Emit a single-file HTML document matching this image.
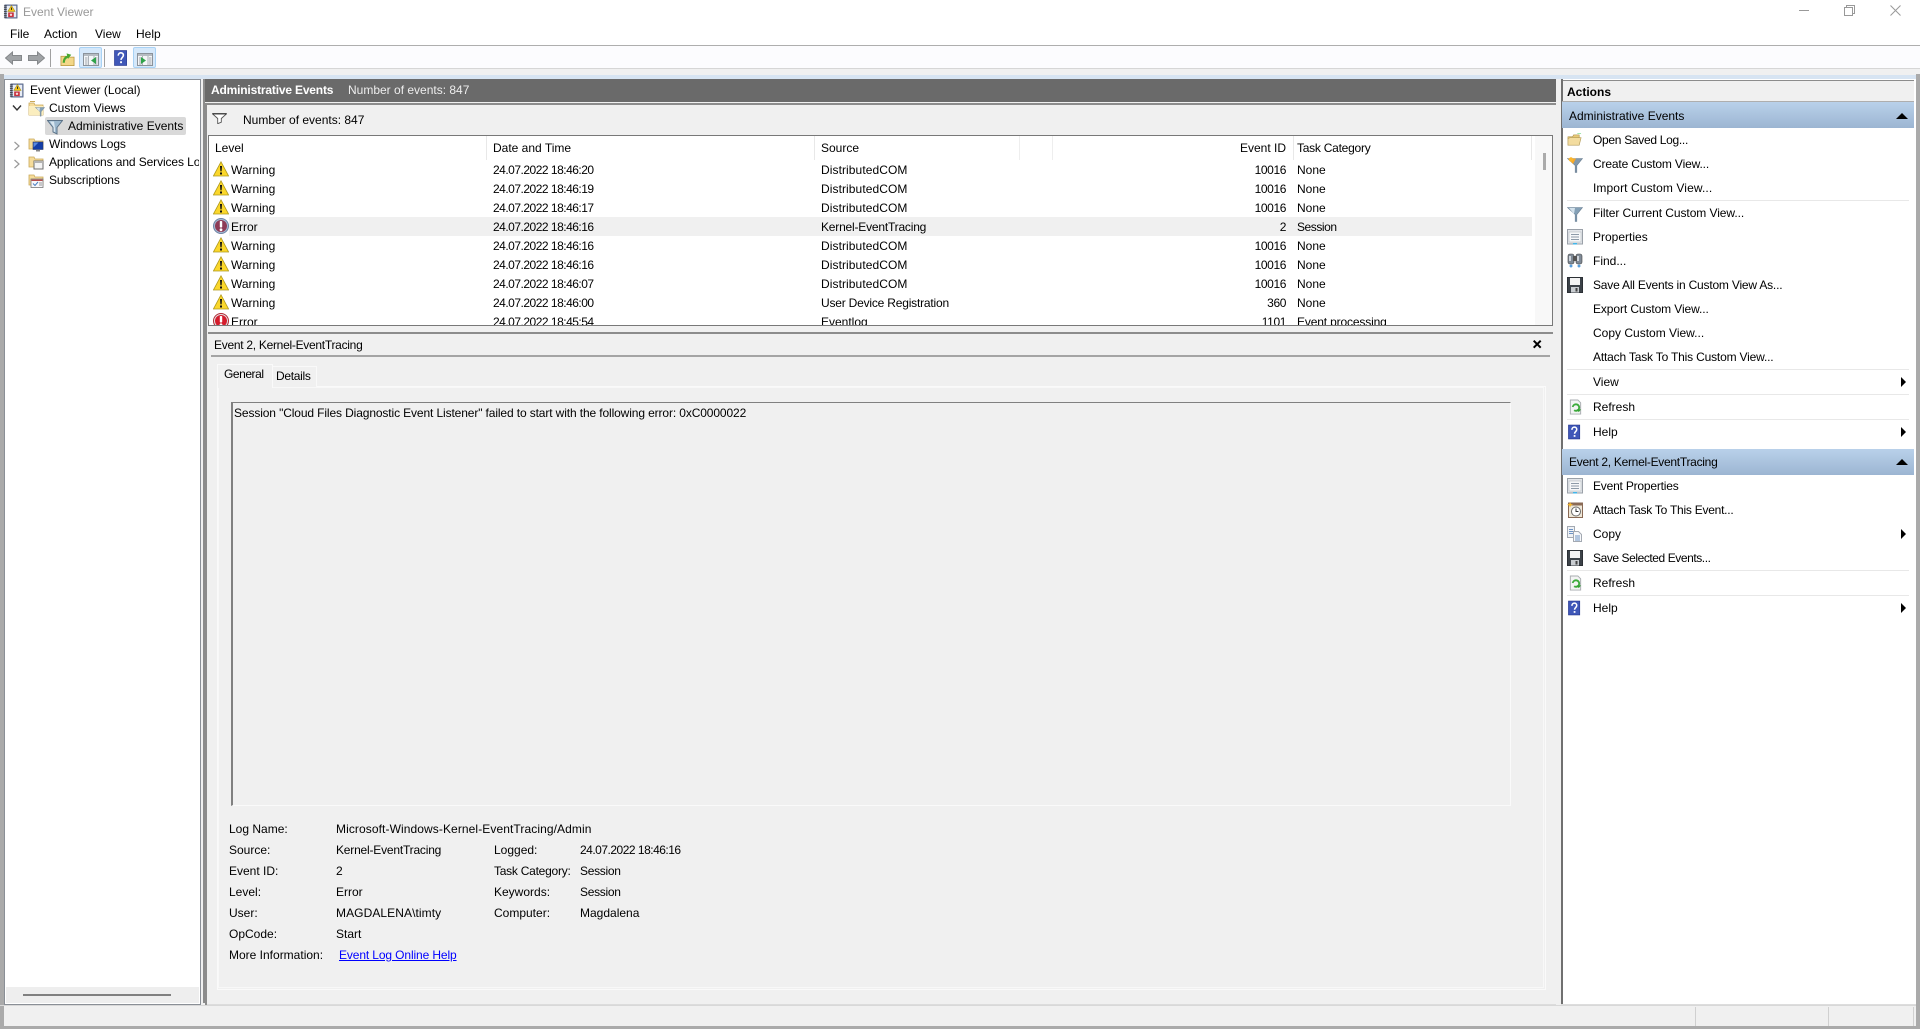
<!DOCTYPE html>
<html><head><meta charset="utf-8"><title>Event Viewer</title>
<style>
html,body{margin:0;padding:0;width:1920px;height:1029px;overflow:hidden;background:#f0f0f0}
body{position:relative;font:12px/16px "Liberation Sans",Arial,sans-serif;color:#000}
.b,.t,svg{position:absolute;display:block}
.t{white-space:nowrap;height:16px}
.r{text-align:right}
.dt{letter-spacing:-.5px}
.n{letter-spacing:-.4px}
.ds{letter-spacing:.08px}
.sep{position:absolute;left:1567px;width:342px;height:1px;background:#e8e8e8}
.hd{position:absolute;left:1562px;width:352px;height:26px;background:linear-gradient(#b9d1ea,#9cb5d2)}
.tri{position:absolute;left:1896px;width:0;height:0;border-left:6px solid transparent;border-right:6px solid transparent;border-bottom:6px solid #000}
.arr{position:absolute;left:1901px;width:0;height:0;border-top:5px solid transparent;border-bottom:5px solid transparent;border-left:5px solid #000}
</style></head><body>
<svg width="0" height="0" style="position:absolute"><defs>
<symbol id="warn" viewBox="0 0 16 16"><path d="M8 .8 15.6 15H.4Z" fill="#fbd72b" stroke="#b09a1e" stroke-width=".8"/><path d="M7 5h2l-.4 5.4H7.400Z" fill="#111"/><rect x="7" y="11.500" width="2" height="2" fill="#111"/></symbol>
<symbol id="err" viewBox="0 0 16 16"><circle cx="8" cy="8" r="7.500" fill="#e2e2e2" stroke="#b02a35"/><circle cx="8" cy="8" r="6" fill="#d41c2c"/><rect x="6.800" y="3" width="2.400" height="6.500" rx=".8" fill="#fff"/><circle cx="8" cy="11.800" r="1.400" fill="#fff"/></symbol>
<symbol id="errd" viewBox="0 0 16 16"><circle cx="8" cy="8" r="7.500" fill="#a5bbd2" stroke="#6f83a5"/><circle cx="8" cy="8" r="6" fill="#8e3b56"/><rect x="6.800" y="3" width="2.400" height="6.500" rx=".8" fill="#fff"/><circle cx="8" cy="11.800" r="1.400" fill="#fff"/></symbol>
<symbol id="ev" viewBox="0 0 16 16"><rect x="2" y="1" width="13" height="14" fill="#8a97b5" stroke="#4a5a80" stroke-width=".8"/><rect x="4" y="2" width="10" height="12" fill="#e8edf5"/><path d="M1 2h3M1 4h3M1 6h3M1 8h3M1 10h3M1 12h3M1 14h3" stroke="#333" stroke-width=".8"/><path d="M9 1.500 13 8H5Z" fill="#f2c419" stroke="#8f7a10" stroke-width=".5"/><rect x="8.600" y="3.800" width="1" height="2.500" fill="#222"/><rect x="5.500" y="9" width="6" height="5" fill="#c9333f"/><circle cx="8.500" cy="11.500" r="1.300" fill="#f3dede"/></symbol>
<symbol id="folder" viewBox="0 0 16 16"><path d="M1 3h5l1 2h8v10H1Z" fill="#f6dc9a" stroke="#c9a85a" stroke-width=".8"/><path d="M1 6h14v9H1Z" fill="#fbeebf"/><path d="M2 1.500h5" stroke="#c9a85a"/></symbol>
<symbol id="funnel" viewBox="0 0 16 16"><path d="M.5 1.500h15L10 8.500V15l-4-2V8.500Z" fill="#9db9cf" stroke="#5c7388"/><path d="M3 2.500h4L8 9v4L6.500 12.500V8Z" fill="#d8e6ef"/></symbol>
<symbol id="funnelo" viewBox="0 0 16 16"><path d="M.5 1.500h15L9.800 8.500V15.500H8.200V8.500Z" fill="#8399ab" stroke="#6c8094" stroke-width=".6"/><path d="M1 1.500h8L6 7Z" fill="#f9a825"/><circle cx="4" cy="2.500" r="2.200" fill="#fbb62c"/></symbol>
<symbol id="funnelg" viewBox="0 0 16 16"><path d="M.5 1.500h15L9.800 8.500V15.500H8.200V8.500Z" fill="#84a0b6" stroke="#6c8094" stroke-width=".6"/><path d="M2 2h6L7 8Z" fill="#d4e2ec"/></symbol>
<symbol id="funnelk" viewBox="0 0 15 11" preserveAspectRatio="none"><path d="M.5 .8h14l-5.200 4.700v3.700l-3.600 1.500V5.500Z" fill="#fff" stroke="#555" stroke-width=".9"/><path d="M.5 .8h14" stroke="#222" stroke-width="1.100"/></symbol>
<symbol id="prop" viewBox="0 0 16 16"><rect x=".5" y=".5" width="15" height="14.500" fill="#e3e6ea" stroke="#9aa0a8"/><rect x="2" y="3" width="12" height="10" fill="#f6f7f9" stroke="#b7bcc2" stroke-width=".6"/><path d="M4 5.500h8M4 8h8M4 10.500h8" stroke="#8d9aa8"/><rect x="6" y="14" width="4" height="1.500" fill="#41b6ea"/></symbol>
<symbol id="find" viewBox="0 0 16 16"><rect x="1" y="1" width="6" height="10" rx="2" fill="#7f8a96" stroke="#444" stroke-width=".6"/><rect x="9" y="1" width="6" height="10" rx="2" fill="#7f8a96" stroke="#444" stroke-width=".6"/><rect x="6" y="3" width="4" height="5" fill="#555"/><rect x="2" y="3" width="2" height="5" fill="#cfd5dc"/><rect x="10" y="3" width="2" height="5" fill="#cfd5dc"/><path d="M4 11.500v3M2.500 13h3M12 11.500v3M10.500 13h3" stroke="#3b8ed8" stroke-width="1.200"/></symbol>
<symbol id="save" viewBox="0 0 16 16"><path d="M.5.500h15v15H.5Z" fill="#3c4248" stroke="#2c3035"/><rect x="3" y="1" width="10" height="7" fill="#f3f3f3"/><rect x="4" y="10" width="8" height="5.500" fill="#c9cdd1"/><rect x="8.500" y="11" width="2" height="3.500" fill="#444"/></symbol>
<symbol id="refresh" viewBox="0 0 16 16"><path d="M2.500.500h8l3 3v12h-11Z" fill="#f3f4f4" stroke="#a8adb0"/><path d="M5 8a3.500 3.500 0 1 1 1.500 3.500" fill="none" stroke="#3dab3c" stroke-width="2"/><path d="M9 10.500h5l-2.500 3Z" fill="#33a032"/></symbol>
<symbol id="help" viewBox="0 0 16 16"><rect x=".5" width="13" height="16" fill="#3f57b8" stroke="#1f2f86" stroke-width=".6"/><path d="M4.500 5.500C4.500 1.500 10 1.500 10 5c0 2.500-2.500 2.500-2.500 5" fill="none" stroke="#fff" stroke-width="1.700"/><rect x="6.500" y="11.500" width="2" height="2" fill="#fff"/></symbol>
<symbol id="task" viewBox="0 0 16 16"><rect x="1.500" y="1" width="14" height="14.500" fill="#eee7d8" stroke="#8a6a55"/><rect x="1.500" y="1" width="14" height="2.500" fill="#8a6a55"/><circle cx="9" cy="9.500" r="4.500" fill="#fff" stroke="#6b6b6b"/><path d="M9 6.500v3h2.500" stroke="#333" fill="none"/><path d="M3 0l1 2 2 .5-2 1-1 2-.8-2L0 2.500 2.200 2Z" fill="#f5b82c"/></symbol>
<symbol id="copy" viewBox="0 0 16 16"><path d="M.5.500h7v11h-7Z" fill="#eef1f5" stroke="#a3a9b2"/><path d="M2 3.500h4M2 5.500h4M2 7.500h4" stroke="#6d93c4"/><path d="M6.500 5.500h5l3 3v7h-8Z" fill="#f7f8fa" stroke="#a3a9b2"/><path d="M8 10h5M8 12h5M8 14h5" stroke="#6d93c4"/></symbol>
<symbol id="open" viewBox="0 0 16 16"><path d="M1 4h5l1-2h6v4H1Z" fill="#e6c877" stroke="#a98a3e" stroke-width=".6"/><path d="M1 6l2-1h12l-2 8H1Z" fill="#f3dc9f" stroke="#b39a55" stroke-width=".7"/><path d="M11 0h4" stroke="#33cc55"/></symbol>
<symbol id="up" viewBox="0 0 16 16"><path d="M1 5h5l1 1h8v9H1Z" fill="#f3d788" stroke="#b8963d" stroke-width=".8"/><path d="M4 12c0-4 2-6 5-7" stroke="#49a82f" stroke-width="2.400" fill="none"/><path d="M7 2l5 1.500L8.500 8Z" fill="#49a82f"/></symbol>
<symbol id="pane1" viewBox="0 0 16 13"><rect x=".5" y=".5" width="15" height="12" fill="#f4f6f8" stroke="#8b929a"/><rect x="1" y="1" width="14" height="2" fill="#b6bcc2"/><path d="M5.500 3v9M11 3v9" stroke="#adb3b9"/><path d="M2 5h2.500M2 7h2.500M2 9h2.500M2 11h2.500M12 5h2.500M12 7h2.500M12 9h2.500M12 11h2.500" stroke="#a0a6ad"/></symbol>
<symbol id="mon" viewBox="0 0 16 16"><path d="M1 3h5l1 2h8v8H1Z" fill="#f6dc9a" stroke="#c9a85a" stroke-width=".8"/><rect x="5" y="6" width="10" height="7.500" fill="#143ea8" stroke="#2b3a66" stroke-width=".6"/><path d="M5.500 6.500h5l-5 5Z" fill="#5a8ae0"/><rect x="8" y="14" width="4" height="1.500" fill="#888"/></symbol>
<symbol id="app" viewBox="0 0 16 16"><path d="M1 3h5l1 2h8v8H1Z" fill="#f6dc9a" stroke="#c9a85a" stroke-width=".8"/><rect x="6" y="7" width="9" height="8" fill="#f4f4f4" stroke="#6f6f6f"/><rect x="6" y="7" width="9" height="2" fill="#b3b3b3"/></symbol>
<symbol id="sub" viewBox="0 0 16 16"><path d="M1 3h5l1 2h8v8H1Z" fill="#f6dc9a" stroke="#c9a85a" stroke-width=".8"/><rect x="3" y="7" width="12" height="8.500" fill="#f7f7fa" stroke="#777" stroke-width=".8"/><path d="M3.500 7.500h11v1.500h-11Z" fill="#b74b4b"/><path d="M5 11.500l2 2 3-3.500" stroke="#4a7fc1" fill="none"/><path d="M11 11h3M11 13h3" stroke="#999"/></symbol>
</defs></svg>

<!-- edges -->
<div class="b" style="left:0;top:74px;width:4px;height:955px;background:#aaa"></div>
<div class="b" style="left:1916px;top:74px;width:4px;height:955px;background:#aaa"></div>
<div class="b" style="left:0;top:1026px;width:1920px;height:3px;background:#aaa"></div>

<!-- title -->
<div class="b" style="left:0;top:0;width:1920px;height:45px;background:#fff"></div>
<svg style="left:3px;top:4px" width="15" height="15"><use href="#ev"/></svg>
<div class="t" style="left:23px;top:4px;color:#999">Event Viewer</div>
<svg style="left:1798px;top:3px" width="14" height="14"><path d="M1 7.500h10" stroke="#999" fill="none"/></svg>
<svg style="left:1844px;top:5px" width="12" height="12"><path d="M.5 2.500h8v8h-8Z M2.500 2.500V.5h8v8H8.500" fill="none" stroke="#999"/></svg>
<svg style="left:1890px;top:5px" width="12" height="12"><path d="M.5.500l10 10M10.500.500l-10 10" stroke="#999" fill="none"/></svg>
<div class="t" style="left:10px;top:26px">File</div>
<div class="t" style="left:44px;top:26px">Action</div>
<div class="t" style="left:95px;top:26px">View</div>
<div class="t" style="left:136px;top:26px">Help</div>
<div class="b" style="left:0;top:45px;width:1920px;height:1px;background:#aeaeae"></div>

<!-- toolbar -->
<div class="b" style="left:0;top:46px;width:1920px;height:22px;background:#fcfcfe"></div>
<div class="b" style="left:0;top:68px;width:1920px;height:1px;background:#d6d6d6"></div>
<svg style="left:5px;top:51px" width="17" height="14"><path d="M.5 7 7.500 1v3.500h9v5h-9V13Z" fill="#a0a3a6" stroke="#85888b"/></svg>
<svg style="left:28px;top:51px" width="17" height="14"><path d="M16.500 7 9.500 1v3.500h-9v5h9V13Z" fill="#a0a3a6" stroke="#85888b"/></svg>
<div class="b" style="left:50px;top:49px;width:1px;height:18px;background:#a0a0a0"></div>
<svg style="left:60px;top:51px" width="15" height="16"><use href="#up"/></svg>
<div class="b" style="left:79px;top:47px;width:21px;height:19px;background:#d5e8fa;border:1px solid #a8d2f5;border-radius:2px"></div>
<svg style="left:83px;top:53px" width="16" height="13"><use href="#pane1"/></svg>
<svg style="left:91px;top:57px" width="6" height="7"><path d="M5 0v7L0 3.500Z" fill="#2fa34a"/></svg>
<div class="b" style="left:104px;top:49px;width:1px;height:18px;background:#a0a0a0"></div>
<svg style="left:114px;top:50px" width="15" height="16"><use href="#help"/></svg>
<div class="b" style="left:133px;top:47px;width:21px;height:19px;background:#d5e8fa;border:1px solid #a8d2f5;border-radius:2px"></div>
<svg style="left:137px;top:53px" width="16" height="13"><use href="#pane1"/></svg>
<svg style="left:141px;top:57px" width="6" height="7"><path d="M0 0v7l5-3.500Z" fill="#2fa34a"/></svg>

<!-- band -->
<div class="b" style="left:4px;top:75px;width:1912px;height:4px;background:#d7e4f2"></div>

<!-- tree -->
<div class="b" style="left:4px;top:79px;width:195px;height:924px;background:#fff;border:1px solid #8a8f96"></div>
<div class="b" style="left:6px;top:987px;width:193px;height:16px;background:#eee"></div>
<div class="b" style="left:23px;top:994px;width:148px;height:2px;background:#808080"></div>
<div class="b" style="left:45px;top:117px;width:141px;height:18px;background:#d9d9d9;border-radius:2px"></div>
<svg style="left:9px;top:83px" width="15" height="15"><use href="#ev"/></svg>
<div class="t" style="left:30px;top:82px">Event Viewer (Local)</div>
<svg style="left:12px;top:104px" width="10" height="8"><path d="M1 1.500 5 6l4-4.500" fill="none" stroke="#333" stroke-width="1.400"/></svg>
<svg style="left:28px;top:100px" width="16" height="16"><use href="#folder"/></svg>
<svg style="left:35px;top:106px" width="10" height="11"><use href="#funnelg"/></svg>
<div class="t" style="left:49px;top:100px">Custom Views</div>
<svg style="left:47px;top:119px" width="16" height="16"><use href="#funnel"/></svg>
<div class="t" style="left:68px;top:118px">Administrative Events</div>
<svg style="left:13px;top:141px" width="8" height="10"><path d="M1.500 1 6 5 1.500 9" fill="none" stroke="#999" stroke-width="1.200"/></svg>
<svg style="left:28px;top:136px" width="16" height="16"><use href="#mon"/></svg>
<div class="t" style="left:49px;top:136px;letter-spacing:-.1px">Windows Logs</div>
<svg style="left:13px;top:159px" width="8" height="10"><path d="M1.500 1 6 5 1.500 9" fill="none" stroke="#999" stroke-width="1.200"/></svg>
<svg style="left:28px;top:154px" width="16" height="16"><use href="#app"/></svg>
<div class="t" style="left:49px;top:154px;width:150px;overflow:hidden;letter-spacing:-.1px">Applications and Services Logs</div>
<svg style="left:28px;top:172px" width="16" height="16"><use href="#sub"/></svg>
<div class="t" style="left:49px;top:172px;letter-spacing:-.1px">Subscriptions</div>

<!-- center header -->
<div class="b" style="left:203px;top:79px;width:2px;height:924px;background:#8c8c8c"></div>
<div class="b" style="left:205px;top:79px;width:1351px;height:23px;background:#6a6a6a"></div>
<div class="t" style="left:211px;top:82px;color:#fff;font-weight:bold;letter-spacing:-.18px">Administrative Events</div>
<div class="t" style="left:348px;top:82px;color:#eee">Number of events: 847</div>
<div class="b" style="left:205px;top:103px;width:1351px;height:2px;background:#8c8c8c"></div>
<div class="b" style="left:205px;top:103px;width:2px;height:902px;background:#8c8c8c"></div>
<svg style="left:212px;top:113px" width="15" height="11"><use href="#funnelk"/></svg>
<div class="t" style="left:243px;top:112px">Number of events: 847</div>

<!-- list -->
<div class="b" style="left:208px;top:135px;width:1343px;height:189px;background:#fff;border:1px solid #787878;overflow:hidden">
<div class="b" style="left:20px;top:81px;width:1303px;height:19px;background:#f0f0f0"></div>
<div class="b" style="left:1326px;top:0;width:17px;height:190px;background:#f8f8f8"></div>
<div class="b" style="left:1334px;top:17px;width:3px;height:17px;background:#ababab"></div>
<div class="b" style="left:277px;top:0;width:1px;height:24px;background:#e8e8e8"></div>
<div class="b" style="left:605px;top:0;width:1px;height:24px;background:#e8e8e8"></div>
<div class="b" style="left:810px;top:0;width:1px;height:24px;background:#eee"></div>
<div class="b" style="left:843px;top:0;width:1px;height:24px;background:#eee"></div>
<div class="b" style="left:1084px;top:0;width:1px;height:24px;background:#e8e8e8"></div>
<div class="b" style="left:1322px;top:0;width:1px;height:24px;background:#e8e8e8"></div>
<div class="t" style="left:6px;top:4px">Level</div><div class="t" style="left:284px;top:4px">Date and Time</div><div class="t" style="left:612px;top:4px">Source</div><div class="t r" style="left:1000px;width:77px;top:4px">Event ID</div><div class="t" style="left:1088px;top:4px;letter-spacing:-.25px">Task Category</div>

<svg style="left:4px;top:25px" width="16" height="16"><use href="#warn"/></svg><div class="t" style="left:22px;top:26px">Warning</div><div class="t dt" style="left:284px;top:26px">24.07.2022 18:46:20</div><div class="t ds" style="left:612px;top:26px">DistributedCOM</div><div class="t r n" style="left:1000px;width:77px;top:26px">10016</div><div class="t" style="left:1088px;top:26px">None</div>
<svg style="left:4px;top:44px" width="16" height="16"><use href="#warn"/></svg><div class="t" style="left:22px;top:45px">Warning</div><div class="t dt" style="left:284px;top:45px">24.07.2022 18:46:19</div><div class="t ds" style="left:612px;top:45px">DistributedCOM</div><div class="t r n" style="left:1000px;width:77px;top:45px">10016</div><div class="t" style="left:1088px;top:45px">None</div>
<svg style="left:4px;top:63px" width="16" height="16"><use href="#warn"/></svg><div class="t" style="left:22px;top:64px">Warning</div><div class="t dt" style="left:284px;top:64px">24.07.2022 18:46:17</div><div class="t ds" style="left:612px;top:64px">DistributedCOM</div><div class="t r n" style="left:1000px;width:77px;top:64px">10016</div><div class="t" style="left:1088px;top:64px">None</div>
<svg style="left:4px;top:82px" width="16" height="16"><use href="#errd"/></svg><div class="t" style="left:22px;top:83px">Error</div><div class="t dt" style="left:284px;top:83px">24.07.2022 18:46:16</div><div class="t" style="left:612px;top:83px;letter-spacing:-.2px">Kernel-EventTracing</div><div class="t r n" style="left:1000px;width:77px;top:83px">2</div><div class="t" style="left:1088px;top:83px;letter-spacing:-.45px">Session</div>
<svg style="left:4px;top:101px" width="16" height="16"><use href="#warn"/></svg><div class="t" style="left:22px;top:102px">Warning</div><div class="t dt" style="left:284px;top:102px">24.07.2022 18:46:16</div><div class="t ds" style="left:612px;top:102px">DistributedCOM</div><div class="t r n" style="left:1000px;width:77px;top:102px">10016</div><div class="t" style="left:1088px;top:102px">None</div>
<svg style="left:4px;top:120px" width="16" height="16"><use href="#warn"/></svg><div class="t" style="left:22px;top:121px">Warning</div><div class="t dt" style="left:284px;top:121px">24.07.2022 18:46:16</div><div class="t ds" style="left:612px;top:121px">DistributedCOM</div><div class="t r n" style="left:1000px;width:77px;top:121px">10016</div><div class="t" style="left:1088px;top:121px">None</div>
<svg style="left:4px;top:139px" width="16" height="16"><use href="#warn"/></svg><div class="t" style="left:22px;top:140px">Warning</div><div class="t dt" style="left:284px;top:140px">24.07.2022 18:46:07</div><div class="t ds" style="left:612px;top:140px">DistributedCOM</div><div class="t r n" style="left:1000px;width:77px;top:140px">10016</div><div class="t" style="left:1088px;top:140px">None</div>
<svg style="left:4px;top:158px" width="16" height="16"><use href="#warn"/></svg><div class="t" style="left:22px;top:159px">Warning</div><div class="t dt" style="left:284px;top:159px">24.07.2022 18:46:00</div><div class="t" style="left:612px;top:159px;letter-spacing:-.2px">User Device Registration</div><div class="t r n" style="left:1000px;width:77px;top:159px">360</div><div class="t" style="left:1088px;top:159px">None</div>
<svg style="left:4px;top:177px" width="16" height="16"><use href="#err"/></svg><div class="t" style="left:22px;top:178px">Error</div><div class="t dt" style="left:284px;top:178px">24.07.2022 18:45:54</div><div class="t" style="left:612px;top:178px">Eventlog</div><div class="t r n" style="left:1000px;width:77px;top:178px">1101</div><div class="t" style="left:1088px;top:178px;letter-spacing:-.15px">Event processing</div>
</div>

<!-- lower pane -->
<div class="b" style="left:208px;top:332px;width:1345px;height:2px;background:#8c8c8c"></div>
<div class="t" style="left:214px;top:337px;letter-spacing:-.28px">Event 2, Kernel-EventTracing</div>
<svg style="left:1533px;top:340px" width="9" height="9"><path d="M.7.700l7 7M7.700.700l-7 7" stroke="#000" stroke-width="2" fill="none"/></svg>
<div class="b" style="left:211px;top:355px;width:1339px;height:2px;background:#a4a4a4"></div>
<div class="b" style="left:217px;top:386px;width:1327px;height:602px;background:#f0f0f0;border:1px solid #fafafa"></div>
<div class="b" style="left:218px;top:387px;width:1324px;height:599px;border:1px solid #f8f8f8"></div>
<div class="b" style="left:272px;top:366px;width:43px;height:20px;background:#f0f0f0;border:1px solid #f9f9f9;border-bottom:0"></div>
<div class="t" style="left:276px;top:368px;letter-spacing:-.3px">Details</div>
<div class="b" style="left:217px;top:364px;width:54px;height:23px;background:#f0f0f0;border:1px solid #fafafa;border-bottom:0"></div>
<div class="t" style="left:224px;top:366px;letter-spacing:-.45px">General</div>
<div class="b" style="left:231px;top:402px;width:1277px;height:402px;border-top:1px solid #808080;border-left:2px solid #808080;border-right:1px solid #fafafa;border-bottom:1px solid #fafafa"></div>
<div class="t" style="left:234px;top:405px;letter-spacing:-.12px">Session "Cloud Files Diagnostic Event Listener" failed to start with the following error: 0xC0000022</div>

<div class="t" style="left:229px;top:821px">Log Name:</div><div class="t" style="left:336px;top:821px;letter-spacing:.09px">Microsoft-Windows-Kernel-EventTracing/Admin</div>
<div class="t" style="left:229px;top:842px">Source:</div><div class="t" style="left:336px;top:842px;letter-spacing:-.2px">Kernel-EventTracing</div><div class="t" style="left:494px;top:842px">Logged:</div><div class="t dt" style="left:580px;top:842px">24.07.2022 18:46:16</div>
<div class="t" style="left:229px;top:863px">Event ID:</div><div class="t" style="left:336px;top:863px">2</div><div class="t" style="left:494px;top:863px;letter-spacing:-.25px">Task Category:</div><div class="t" style="left:580px;top:863px;letter-spacing:-.3px">Session</div>
<div class="t" style="left:229px;top:884px">Level:</div><div class="t" style="left:336px;top:884px">Error</div><div class="t" style="left:494px;top:884px">Keywords:</div><div class="t" style="left:580px;top:884px;letter-spacing:-.3px">Session</div>
<div class="t" style="left:229px;top:905px">User:</div><div class="t" style="left:336px;top:905px;letter-spacing:.08px">MAGDALENA\timty</div><div class="t" style="left:494px;top:905px">Computer:</div><div class="t" style="left:580px;top:905px">Magdalena</div>
<div class="t" style="left:229px;top:926px">OpCode:</div><div class="t" style="left:336px;top:926px">Start</div>
<div class="t" style="left:229px;top:947px">More Information:</div><div class="t" style="left:339px;top:947px;color:#00f;text-decoration:underline;letter-spacing:-.12px">Event Log Online Help</div>
<div class="b" style="left:207px;top:1004px;width:1349px;height:1px;background:#dcdcdc"></div>

<!-- actions -->
<div class="b" style="left:1561px;top:79px;width:355px;height:925px;background:#fff;border-bottom:1px solid #ddd"></div>
<div class="b" style="left:1561px;top:79px;width:2px;height:925px;background:#707070"></div>
<div class="b" style="left:1563px;top:80px;width:351px;height:21px;background:#f0f0f0;border-top:1px solid #8c8c8c"></div>
<div class="b" style="left:1562px;top:101px;width:352px;height:1px;background:#aeaeae"></div>
<div class="t" style="left:1567px;top:84px;font-weight:bold">Actions</div>
<div class="hd" style="top:102px"></div><div class="t" style="left:1569px;top:108px">Administrative Events</div><div class="tri" style="top:113px"></div>
<svg style="left:1567px;top:133px" width="15" height="15"><use href="#open"/></svg><div class="t" style="left:1593px;top:132px;letter-spacing:-.3px">Open Saved Log...</div>
<svg style="left:1567px;top:157px" width="16" height="16"><use href="#funnelo"/></svg><div class="t" style="left:1593px;top:156px;letter-spacing:-.15px">Create Custom View...</div>
<div class="t" style="left:1593px;top:180px;letter-spacing:.1px">Import Custom View...</div>
<div class="sep" style="top:200px"></div>
<svg style="left:1567px;top:206px" width="16" height="16"><use href="#funnelg"/></svg><div class="t" style="left:1593px;top:205px;letter-spacing:-.07px">Filter Current Custom View...</div>
<svg style="left:1567px;top:229px" width="16" height="16"><use href="#prop"/></svg><div class="t" style="left:1593px;top:229px">Properties</div>
<svg style="left:1567px;top:253px" width="16" height="16"><use href="#find"/></svg><div class="t" style="left:1593px;top:253px">Find...</div>
<svg style="left:1567px;top:277px" width="16" height="16"><use href="#save"/></svg><div class="t" style="left:1593px;top:277px;letter-spacing:-.2px">Save All Events in Custom View As...</div>
<div class="t" style="left:1593px;top:301px;letter-spacing:-.1px">Export Custom View...</div>
<div class="t" style="left:1593px;top:325px">Copy Custom View...</div>
<div class="t" style="left:1593px;top:349px;letter-spacing:-.18px">Attach Task To This Custom View...</div>
<div class="sep" style="top:369px"></div>
<div class="t" style="left:1593px;top:374px">View</div><div class="arr" style="top:377px"></div>
<div class="sep" style="top:394px"></div>
<svg style="left:1568px;top:399px" width="15" height="16"><use href="#refresh"/></svg><div class="t" style="left:1593px;top:399px">Refresh</div>
<div class="sep" style="top:419px"></div>
<svg style="left:1568px;top:424px" width="14" height="16"><use href="#help"/></svg><div class="t" style="left:1593px;top:424px">Help</div><div class="arr" style="top:427px"></div>

<div class="hd" style="top:449px"></div><div class="t" style="left:1569px;top:454px;letter-spacing:-.28px">Event 2, Kernel-EventTracing</div><div class="tri" style="top:459px"></div>
<svg style="left:1567px;top:478px" width="16" height="16"><use href="#prop"/></svg><div class="t" style="left:1593px;top:478px;letter-spacing:-.2px">Event Properties</div>
<svg style="left:1567px;top:502px" width="16" height="16"><use href="#task"/></svg><div class="t" style="left:1593px;top:502px;letter-spacing:-.25px">Attach Task To This Event...</div>
<svg style="left:1567px;top:526px" width="16" height="16"><use href="#copy"/></svg><div class="t" style="left:1593px;top:526px">Copy</div><div class="arr" style="top:529px"></div>
<svg style="left:1567px;top:550px" width="16" height="16"><use href="#save"/></svg><div class="t" style="left:1593px;top:550px;letter-spacing:-.43px">Save Selected Events...</div>
<div class="sep" style="top:570px"></div>
<svg style="left:1568px;top:575px" width="15" height="16"><use href="#refresh"/></svg><div class="t" style="left:1593px;top:575px">Refresh</div>
<div class="sep" style="top:595px"></div>
<svg style="left:1568px;top:600px" width="14" height="16"><use href="#help"/></svg><div class="t" style="left:1593px;top:600px">Help</div><div class="arr" style="top:603px"></div>

<!-- status -->
<div class="b" style="left:0;top:1005px;width:1916px;height:1px;background:#d8d8d8"></div>
<div class="b" style="left:1695px;top:1007px;width:1px;height:19px;background:#d0d0d0"></div>
<div class="b" style="left:1828px;top:1007px;width:1px;height:19px;background:#d0d0d0"></div>
<div class="b" style="left:1913px;top:1007px;width:1px;height:19px;background:#d0d0d0"></div>
</body></html>
